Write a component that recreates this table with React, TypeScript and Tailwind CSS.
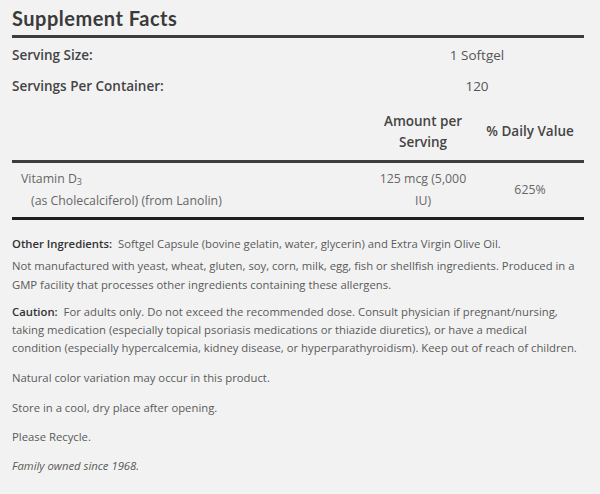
import React from "react";

const font = { fontFamily: "'Open Sans', 'Noto Sans', sans-serif" };

export default function App() {
    return (
        <div className="w-[600px] h-[494px] bg-[#f2f2f2] text-[#555] overflow-hidden" style={font}>
            <div className="px-3">
                {/* Title */}
                <h1 className="text-[20px] font-bold text-[#3a3a3a] leading-none pt-[8px] pb-[7px] tracking-[0.5px] font-[family-name:Lato]">Supplement Facts</h1>
                <div className="w-[572px] h-[3px] bg-[#3d3d3d]" />

                {/* Serving info */}
                <div className="w-[572px] text-[13.5px]">
                    <div className="flex items-center h-[32px] pt-[3px]">
                        <div className="flex-1 text-[#444] font-semibold">Serving Size:</div>
                        <div className="w-[214px] text-center text-[#555]">1 Softgel</div>
                    </div>
                    <div className="flex items-center h-[32px]">
                        <div className="flex-1 text-[#444] font-semibold">Servings Per Container:</div>
                        <div className="w-[214px] text-center text-[#555]">120</div>
                    </div>
                    <div className="flex items-center h-[58px] pt-[1px]">
                        <div className="flex-1" />
                        <div className="w-[106px] text-center text-[#444] font-semibold leading-[21px]">Amount per<br />Serving</div>
                        <div className="w-[108px] text-center text-[#444] font-semibold">% Daily Value</div>
                    </div>
                </div>
                <div className="w-[572px] h-[3px] bg-[#3d3d3d]" />

                {/* Nutrient row */}
                <div className="flex items-center w-[572px] h-[54px] text-[12.3px] text-[#666]">
                    <div className="flex-1 pl-[9px] leading-[22px]">
                        <div>Vitamin D<sub className="text-[9px] align-baseline relative top-[2px]">3</sub></div>
                        <div className="pl-[10px]">(as Cholecalciferol) (from Lanolin)</div>
                    </div>
                    <div className="w-[106px] text-center leading-[22px]">125 mcg (5,000<br />IU)</div>
                    <div className="w-[108px] text-center">625%</div>
                </div>
                <div className="w-[572px] h-[3px] bg-[#1f1f1f]" />

                {/* Notes */}
                <div className="text-[11.3px] leading-[19px] text-[#5a5a5a] pt-[14px] whitespace-nowrap">
                    <p><span className="font-semibold text-[#333]">Other Ingredients:</span>&nbsp; Softgel Capsule (bovine gelatin, water, glycerin) and Extra Virgin Olive Oil.</p>
                    <p className="mt-[3px]">Not manufactured with yeast, wheat, gluten, soy, corn, milk, egg, fish or shellfish ingredients. Produced in a<br />GMP facility that processes other ingredients containing these allergens.</p>
                    <p className="mt-[9px] leading-[18px]"><span className="font-semibold text-[#333]">Caution:</span>&nbsp; For adults only. Do not exceed the recommended dose. Consult physician if pregnant/nursing,<br />taking medication (especially topical psoriasis medications or thiazide diuretics), or have a medical<br />condition (especially hypercalcemia, kidney disease, or hyperparathyroidism). Keep out of reach of children.</p>
                    <p className="mt-[11px]">Natural color variation may occur in this product.</p>
                    <p className="mt-[11px]">Store in a cool, dry place after opening.</p>
                    <p className="mt-[10px]">Please Recycle.</p>
                    <p className="mt-[10px] italic">Family owned since 1968.</p>
                </div>
            </div>
        </div>
    );
}
